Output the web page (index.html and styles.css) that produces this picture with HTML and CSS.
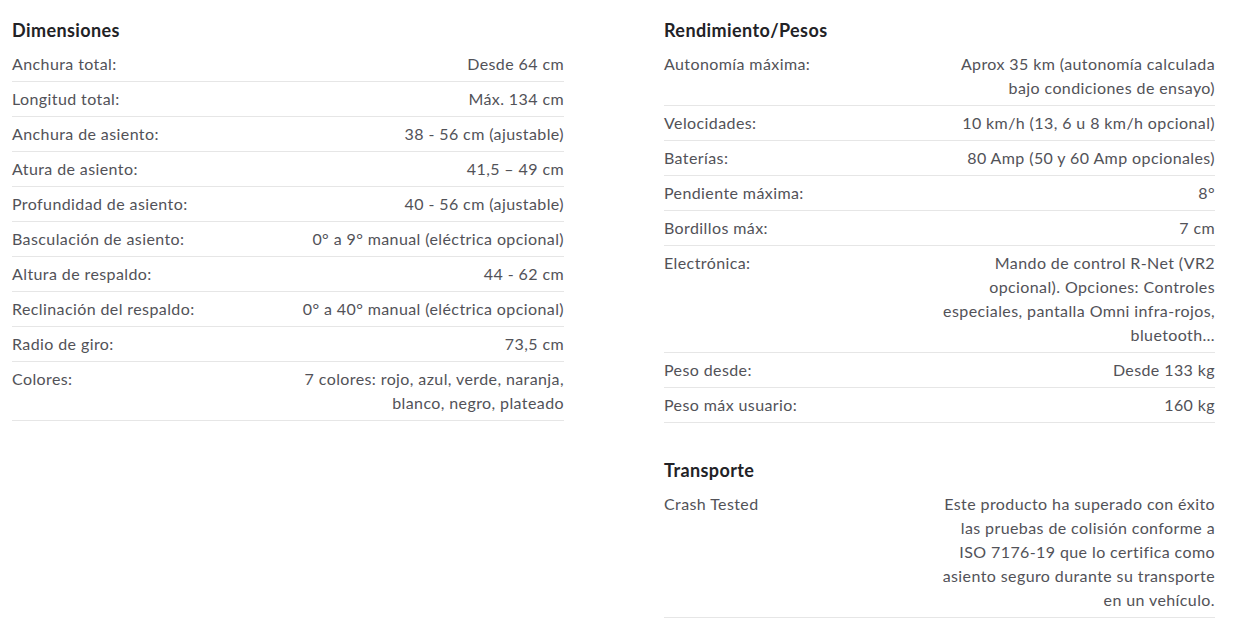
FILE: index.html
```html
<!DOCTYPE html>
<html lang="es">
<head>
<meta charset="utf-8">
<title>Especificaciones</title>
<link rel="stylesheet" href="styles.css">
</head>
<body>
<div class="specs">
  <div class="col">
    <section class="group">
      <h3 class="group-title">Dimensiones</h3>
      <div class="row"><div class="label">Anchura total:</div><div class="value">Desde 64 cm</div></div>
      <div class="row"><div class="label">Longitud total:</div><div class="value">Máx. 134 cm</div></div>
      <div class="row"><div class="label">Anchura de asiento:</div><div class="value">38 - 56 cm (ajustable)</div></div>
      <div class="row"><div class="label">Atura de asiento:</div><div class="value">41,5 – 49 cm</div></div>
      <div class="row"><div class="label">Profundidad de asiento:</div><div class="value">40 - 56 cm (ajustable)</div></div>
      <div class="row"><div class="label">Basculación de asiento:</div><div class="value">0° a 9° manual (eléctrica opcional)</div></div>
      <div class="row"><div class="label">Altura de respaldo:</div><div class="value">44 - 62 cm</div></div>
      <div class="row"><div class="label">Reclinación del respaldo:</div><div class="value">0° a 40° manual (eléctrica opcional)</div></div>
      <div class="row"><div class="label">Radio de giro:</div><div class="value">73,5 cm</div></div>
      <div class="row"><div class="label">Colores:</div><div class="value">7 colores: rojo, azul, verde, naranja, blanco, negro, plateado</div></div>
    </section>
  </div>
  <div class="col">
    <section class="group">
      <h3 class="group-title">Rendimiento/Pesos</h3>
      <div class="row"><div class="label">Autonomía máxima:</div><div class="value">Aprox 35 km (autonomía calculada bajo condiciones de ensayo)</div></div>
      <div class="row"><div class="label">Velocidades:</div><div class="value">10 km/h (13, 6 u 8 km/h opcional)</div></div>
      <div class="row"><div class="label">Baterías:</div><div class="value">80 Amp (50 y 60 Amp opcionales)</div></div>
      <div class="row"><div class="label">Pendiente máxima:</div><div class="value">8°</div></div>
      <div class="row"><div class="label">Bordillos máx:</div><div class="value">7 cm</div></div>
      <div class="row"><div class="label">Electrónica:</div><div class="value">Mando de control R-Net (VR2 opcional). Opciones: Controles especiales, pantalla Omni infra-rojos, bluetooth…</div></div>
      <div class="row"><div class="label">Peso desde:</div><div class="value">Desde 133 kg</div></div>
      <div class="row"><div class="label">Peso máx usuario:</div><div class="value">160 kg</div></div>
    </section>
    <section class="group">
      <h3 class="group-title">Transporte</h3>
      <div class="row"><div class="label">Crash Tested</div><div class="value">Este producto ha superado con éxito las pruebas de colisión conforme a ISO 7176-19 que lo certifica como asiento seguro durante su transporte en un vehículo.</div></div>
    </section>
  </div>
</div>
</body>
</html>
```
FILE: styles.css
```css
html, body {
  margin: 0;
  padding: 0;
  background: #ffffff;
}
body {
  font-family: Lato, "Open Sans", Arial, sans-serif;
  font-size: 16px;
  letter-spacing: 0.4px;
  line-height: 24px;
  color: #525258;
}
.specs {
  display: grid;
  grid-template-columns: 552px 551px;
  column-gap: 100px;
  padding: 18px 12px 0 12px;
}
.group + .group {
  margin-top: 35px;
}
.group-title {
  margin: 0 0 5px 0;
  font-size: 18px;
  line-height: 24px;
  font-weight: 700;
  color: #222226;
}
.row {
  display: grid;
  grid-template-columns: 1fr 1fr;
  padding: 5px 0;
  border-bottom: 1px solid #e6e6e6;
}
.value {
  text-align: right;
}
```
